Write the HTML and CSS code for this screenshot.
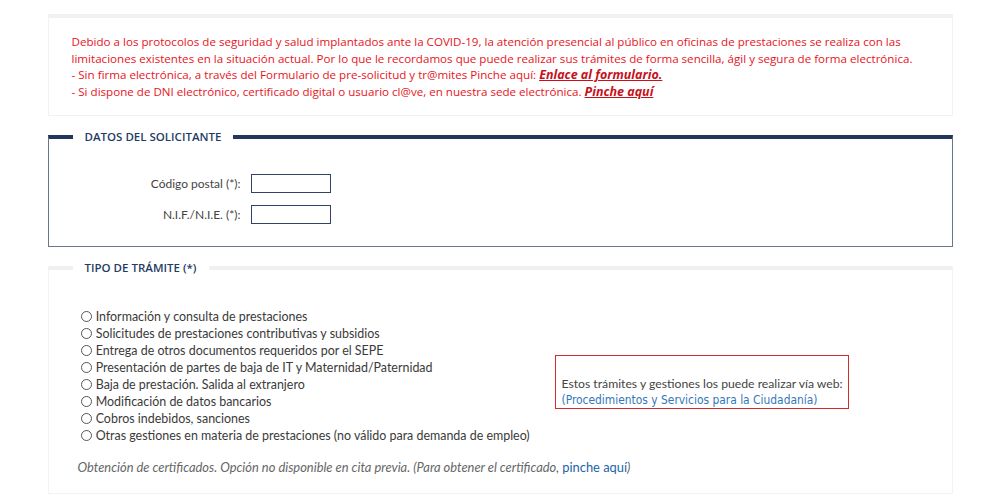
FILE: index.html
```html
<!DOCTYPE html>
<html lang="es">
<head>
  <meta charset="UTF-8" />
  <title>Cita previa - Prestaciones</title>
  <link rel="stylesheet" href="styles.css">
</head>
<body>
  <div class="page">
    <div class="aviso">
      Debido a los protocolos de seguridad y salud implantados ante la COVID-19, la atención presencial al público en oficinas de prestaciones se realiza con las<br>
      limitaciones existentes en la situación actual. Por lo que le recordamos que puede realizar sus trámites de forma sencilla, ágil y segura de forma electrónica.<br>
      - Sin firma electrónica, a través del Formulario de pre-solicitud y tr@mites Pinche aquí: <a href="#">Enlace al formulario.</a><br>
      - Si dispone de DNI electrónico, certificado digital o usuario cl@ve, en nuestra sede electrónica. <a href="#">Pinche aquí</a>
    </div>

    <fieldset class="bloque solicitante">
      <legend>DATOS DEL SOLICITANTE</legend>
      <div class="fila">
        <label for="cp">Código postal (*):</label>
        <input type="text" id="cp" />
      </div>
      <div class="fila">
        <label for="nif">N.I.F./N.I.E. (*):</label>
        <input type="text" id="nif" />
      </div>
    </fieldset>

    <fieldset class="bloque tramite">
      <legend>TIPO DE TRÁMITE (*)</legend>
      <div class="opciones">
        <ul class="lista">
          <li><label><input type="radio" name="tramite" /> Información y consulta de prestaciones</label></li>
          <li><label><input type="radio" name="tramite" /> Solicitudes de prestaciones contributivas y subsidios</label></li>
          <li><label><input type="radio" name="tramite" /> Entrega de otros documentos requeridos por el SEPE</label></li>
          <li><label><input type="radio" name="tramite" /> Presentación de partes de baja de IT y Maternidad/Paternidad</label></li>
          <li><label><input type="radio" name="tramite" /> Baja de prestación. Salida al extranjero</label></li>
          <li><label><input type="radio" name="tramite" /> Modificación de datos bancarios</label></li>
          <li><label><input type="radio" name="tramite" /> Cobros indebidos, sanciones</label></li>
          <li><label><input type="radio" name="tramite" /> Otras gestiones en materia de prestaciones (no válido para demanda de empleo)</label></li>
        </ul>
        <div class="web">
          Estos trámites y gestiones los puede realizar vía web:<br>
          <a href="#">(Procedimientos y Servicios para la Ciudadanía)</a>
        </div>
      </div>
      <p class="nota">Obtención de certificados. Opción no disponible en cita previa. (Para obtener el certificado, <a href="#">pinche aquí</a>)</p>
    </fieldset>
  </div>
</body>
</html>
```

FILE: styles.css
```css
body {
  margin: 0;
  background-color: #ffffff;
  font-family: "Open Sans", "Liberation Sans", sans-serif;
}

.page {
  width: 905px;
  margin: 0 auto;
  padding-top: 14px;
}

.aviso {
  border-top: 4px solid #f2f2f2;
  border-left: 1px solid #f2f2f2;
  border-right: 1px solid #f2f2f2;
  border-bottom: 1px solid #f2f2f2;
  padding: 16px 10px 15px 23px;
  color: #e8141c;
  font-size: 11.6px;
  line-height: 16.5px;
  white-space: nowrap;
}

.aviso a {
  color: #c8101a;
  font-weight: bold;
  font-style: italic;
  font-size: 12.5px;
}

.bloque {
  margin: 0;
  padding: 0;
  min-width: 0;
}

.bloque legend {
  margin-left: 24px;
  padding: 0 12px;
  font-family: "Open Sans", sans-serif;
  font-size: 11.5px;
  font-weight: 600;
  color: #1f3c66;
}

.solicitante {
  margin-top: 13px;
  border: 1px solid #6b7789;
  border-top: 4px solid #22375a;
  padding: 24px 0 16px 0;
}

.fila {
  display: flex;
  align-items: center;
  height: 31px;
}

.fila label {
  width: 192px;
  text-align: right;
  padding-right: 10px;
  font-family: Lato, sans-serif;
  font-size: 12px;
  color: #444;
}

.fila input {
  width: 74px;
  height: 15px;
  border: 1px solid #2f4563;
  padding: 1px 2px;
  margin: 0;
}

.tramite {
  margin-top: 13px;
  border: 1px solid #f3f3f3;
  border-top: 4px solid #f0f0f0;
  padding: 33px 0 18px 0;
}

.opciones {
  display: flex;
  align-items: center;
  margin-left: 32px;
}

.lista {
  list-style: none;
  margin: 0;
  padding: 0;
  width: 474px;
  font-family: Lato, sans-serif;
  font-size: 12.45px;
  line-height: 17px;
  color: #3a3a3a;
}

.lista input {
  appearance: none;
  width: 11px;
  height: 11px;
  border: 1px solid #555;
  border-radius: 50%;
  margin: 0 1px 0 0;
  vertical-align: -1px;
}

.web {
  width: 286px;
  margin-top: 11px;
  border: 1px solid #d62b2b;
  padding: 20px 0 0 6px;
  font-family: Lato, sans-serif;
  font-size: 12.2px;
  line-height: 16px;
  color: #444;
}

.web a {
  font-family: "DejaVu Sans Condensed", "DejaVu Sans", sans-serif;
  font-size: 11.9px;
  color: #3477b8;
  text-decoration: none;
}

.nota {
  margin: 15px 0 0 29px;
  font-family: Lato, sans-serif;
  font-style: italic;
  font-size: 12.9px;
  color: #666;
}

.nota a {
  color: #1b64a8;
  font-style: normal;
  text-decoration: none;
}
```
